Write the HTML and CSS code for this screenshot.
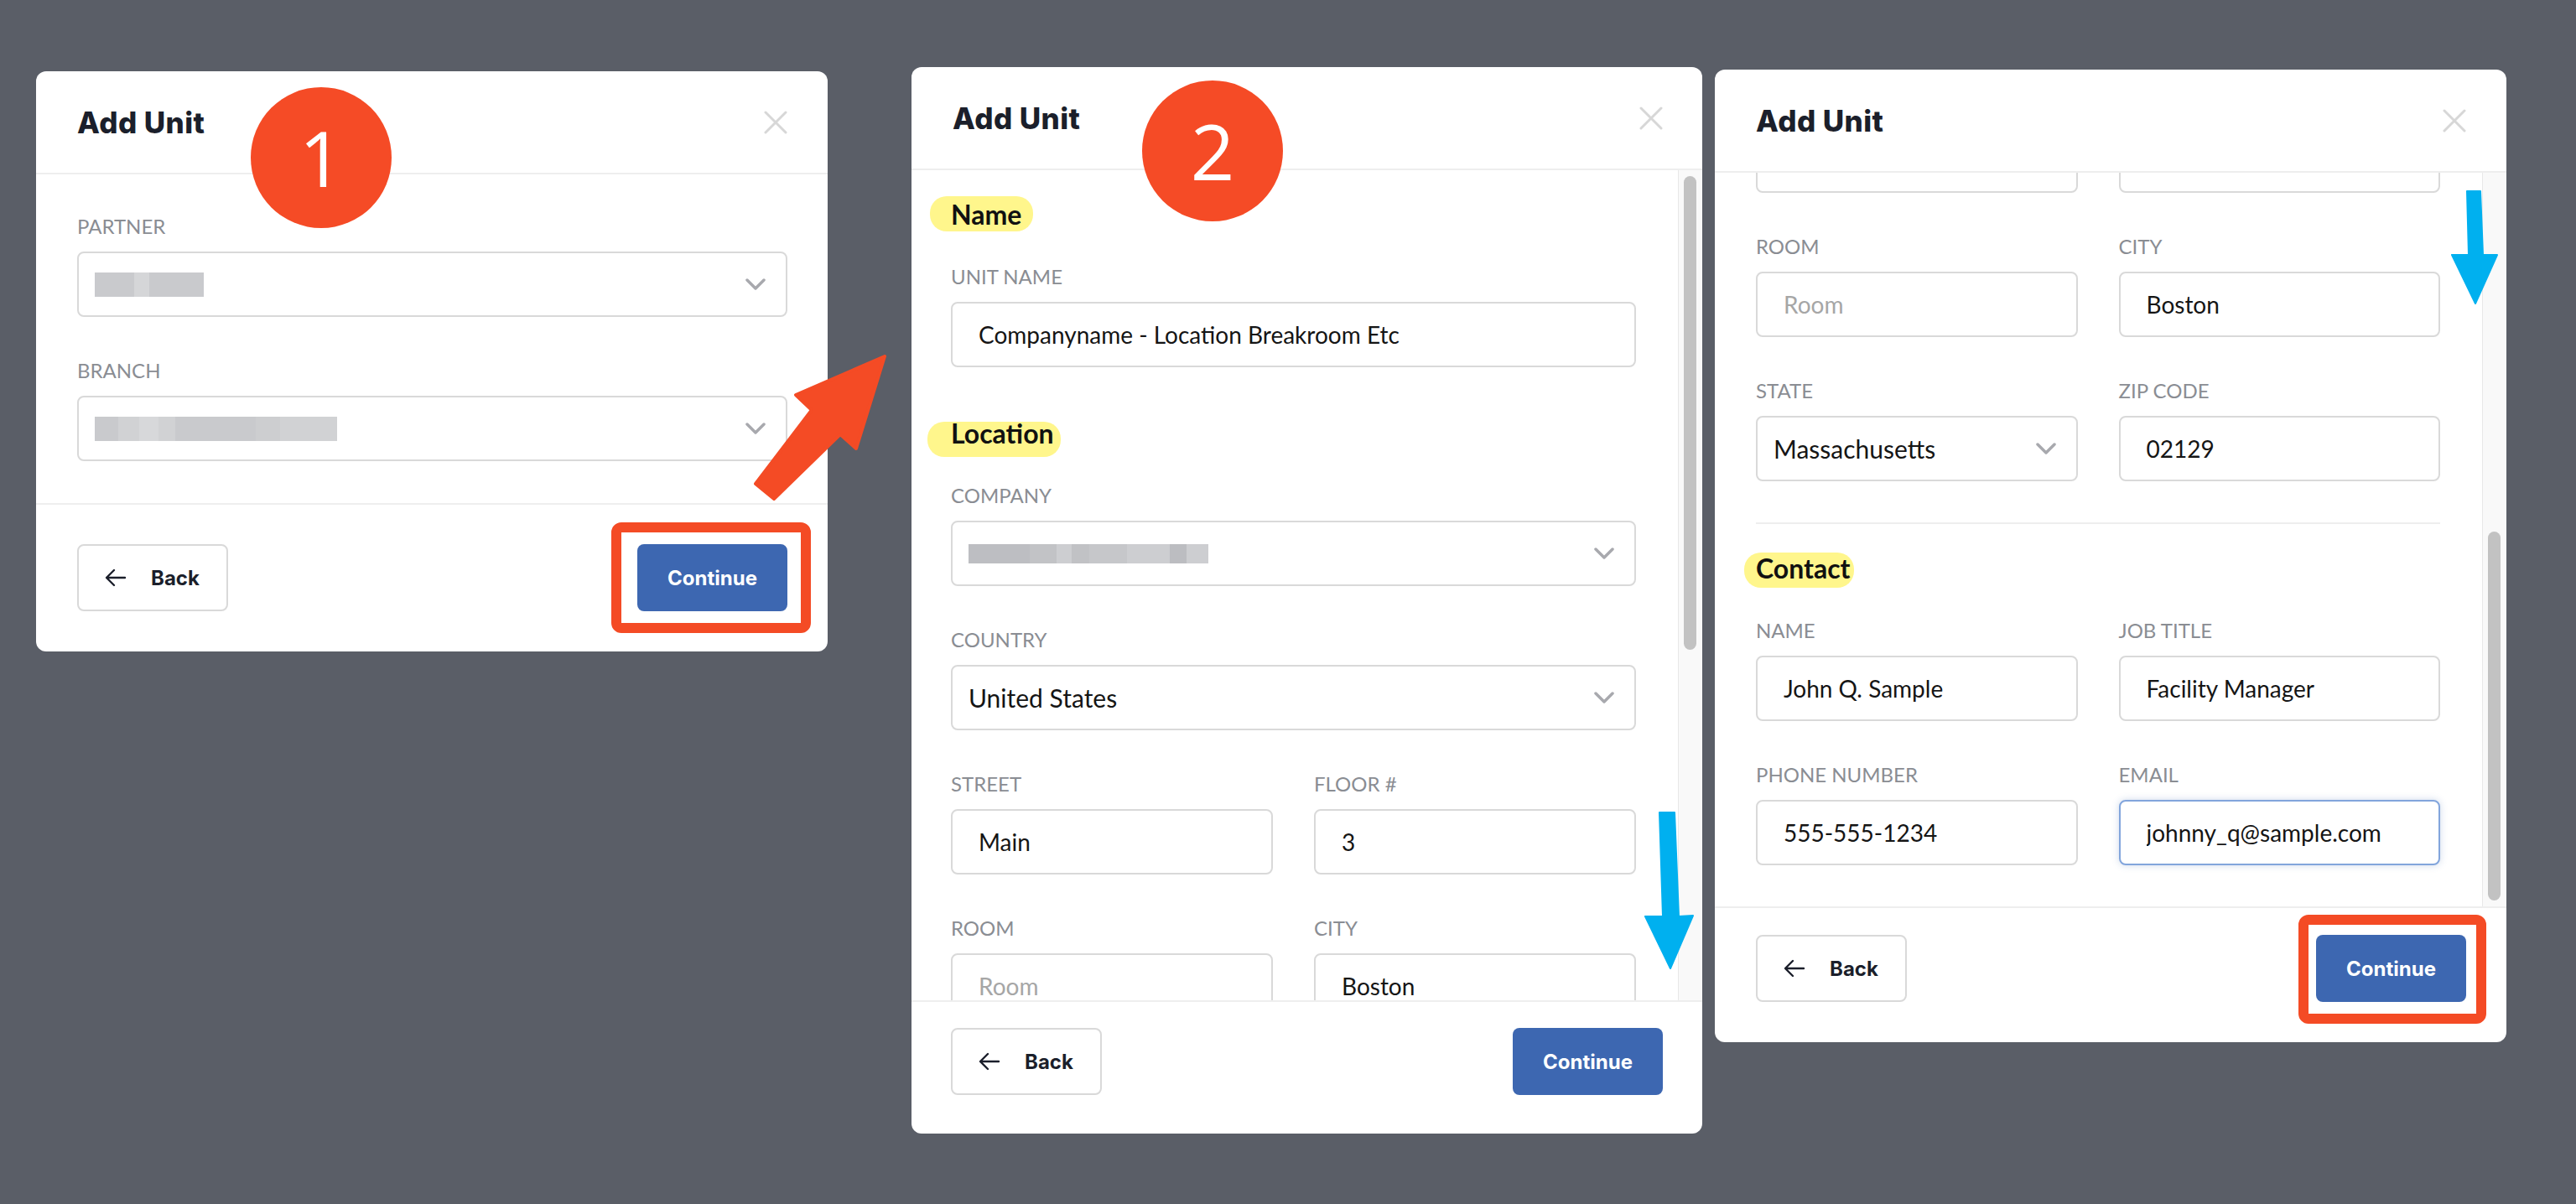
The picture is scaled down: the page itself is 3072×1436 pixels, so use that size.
FILE: index.html
```html
<!DOCTYPE html>
<html lang="en">

<head>
    <title>Add Unit - steps</title>
    <link rel="stylesheet" href="styles.css">
</head>

<body>

    <div class="canvas">

        <!-- step 1 -->
        <div class="panel panel--one">
            <div class="panel-head">
                <h2 class="panel-title">Add Unit</h2>
                <svg class="close" width="28" height="28" viewBox="0 0 28 28"><path d="M2 2L26 26M26 2L2 26" /></svg>
            </div>
            <div class="panel-body panel-body--plain">
                <div class="fields">
                    <div class="field">
                        <div class="label">Partner</div>
                        <div class="select">
                            <span class="blur blur--partner"></span>
                            <svg class="chevron" width="24" height="14" viewBox="0 0 24 14"><path d="M2 2l10 10L22 2" /></svg>
                        </div>
                    </div>
                    <div class="field">
                        <div class="label">Branch</div>
                        <div class="select">
                            <span class="blur blur--branch"></span>
                            <svg class="chevron" width="24" height="14" viewBox="0 0 24 14"><path d="M2 2l10 10L22 2" /></svg>
                        </div>
                    </div>
                </div>
            </div>
            <div class="panel-foot">
                <button class="btn btn-back">
                    <svg width="26" height="22" viewBox="0 0 26 22"><path d="M24 11H3M11 2L2 11l9 9" /></svg>
                    Back
                </button>
                <button class="btn btn-continue mark-one">Continue</button>
            </div>
            <div class="step step--one">1</div>
        </div>

        <!-- step 2 -->
        <div class="panel panel--two">
            <div class="panel-head">
                <h2 class="panel-title">Add Unit</h2>
                <svg class="close" width="28" height="28" viewBox="0 0 28 28"><path d="M2 2L26 26M26 2L2 26" /></svg>
            </div>
            <div class="panel-body">
                <div class="scroll-view">
                    <div class="form" id="form-two"></div>
                </div>
                <div class="scroll-track"><div class="thumb" style="margin-top: 7px; height: 565px;"></div></div>
            </div>
            <div class="panel-foot">
                <button class="btn btn-back">
                    <svg width="26" height="22" viewBox="0 0 26 22"><path d="M24 11H3M11 2L2 11l9 9" /></svg>
                    Back
                </button>
                <button class="btn btn-continue">Continue</button>
            </div>
            <div class="step step--two">2</div>
        </div>

        <!-- step 3, scrolled to the bottom -->
        <div class="panel panel--three">
            <div class="panel-head">
                <h2 class="panel-title">Add Unit</h2>
                <svg class="close" width="28" height="28" viewBox="0 0 28 28"><path d="M2 2L26 26M26 2L2 26" /></svg>
            </div>
            <div class="panel-body">
                <div class="scroll-view">
                    <div class="form form--scrolled" id="form-three"></div>
                </div>
                <div class="scroll-track"><div class="thumb" style="margin-top: 428px; height: 440px;"></div></div>
            </div>
            <div class="panel-foot">
                <button class="btn btn-back">
                    <svg width="26" height="22" viewBox="0 0 26 22"><path d="M24 11H3M11 2L2 11l9 9" /></svg>
                    Back
                </button>
                <button class="btn btn-continue mark-two">Continue</button>
            </div>
        </div>

        <svg class="arrows" width="3072" height="1436" viewBox="0 0 3072 1436">
            <polygon class="arrow-red" points="1055,425 949,471 968,489 901,577 923,595 1002,518 1021,535" />
            <polygon class="arrow-blue" points="1979,969 1997,969 2002,1093 2019,1092 1992,1155 1962,1093 1983,1093" />
            <polygon class="arrow-blue" points="2942,228 2958,228 2961,304 2978,304 2952,362 2924,304 2944,304" />
        </svg>
    </div>

    <template id="unit-form">
        <div class="section">
            <div class="heading"><span class="mark mark--name">Name</span></div>
            <div class="fields">
                <div class="field">
                    <div class="label">Unit Name</div>
                    <input class="input" value="Companyname - Location Breakroom Etc">
                </div>
            </div>
        </div>
        <div class="section">
            <div class="heading"><span class="mark mark--location">Location</span></div>
            <div class="fields">
                <div class="field">
                    <div class="label">Company</div>
                    <div class="select">
                        <span class="blur blur--company"></span>
                        <svg class="chevron" width="24" height="14" viewBox="0 0 24 14"><path d="M2 2l10 10L22 2" /></svg>
                    </div>
                </div>
                <div class="field">
                    <div class="label">Country</div>
                    <div class="select">
                        <span class="select-text">United States</span>
                        <svg class="chevron" width="24" height="14" viewBox="0 0 24 14"><path d="M2 2l10 10L22 2" /></svg>
                    </div>
                </div>
                <div class="row">
                    <div class="field">
                        <div class="label">Street</div>
                        <input class="input" value="Main">
                    </div>
                    <div class="field">
                        <div class="label">Floor #</div>
                        <input class="input" value="3">
                    </div>
                </div>
                <div class="row">
                    <div class="field">
                        <div class="label">Room</div>
                        <input class="input" placeholder="Room">
                    </div>
                    <div class="field">
                        <div class="label">City</div>
                        <input class="input" value="Boston">
                    </div>
                </div>
                <div class="row">
                    <div class="field">
                        <div class="label">State</div>
                        <div class="select">
                            <span class="select-text">Massachusetts</span>
                            <svg class="chevron" width="24" height="14" viewBox="0 0 24 14"><path d="M2 2l10 10L22 2" /></svg>
                        </div>
                    </div>
                    <div class="field">
                        <div class="label">Zip Code</div>
                        <input class="input" value="02129">
                    </div>
                </div>
            </div>
        </div>
        <div class="section section--rule">
            <div class="heading"><span class="mark mark--contact">Contact</span></div>
            <div class="fields">
                <div class="row">
                    <div class="field">
                        <div class="label">Name</div>
                        <input class="input" value="John Q. Sample">
                    </div>
                    <div class="field">
                        <div class="label">Job Title</div>
                        <input class="input" value="Facility Manager">
                    </div>
                </div>
                <div class="row">
                    <div class="field">
                        <div class="label">Phone Number</div>
                        <input class="input" value="555-555-1234">
                    </div>
                    <div class="field">
                        <div class="label">Email</div>
                        <input class="input input--focus" value="johnny_q@sample.com">
                    </div>
                </div>
            </div>
        </div>
    </template>

    <script>
        const tpl = document.getElementById('unit-form');
        ['form-two', 'form-three'].forEach(id => {
            document.getElementById(id).appendChild(tpl.content.cloneNode(true));
        });
    </script>

</body>

</html>
```

FILE: styles.css
```css
body {
    margin: 0;
    background-color: #5a5e67;
    font-family: Lato, "Noto Sans", sans-serif;
}

.canvas {
    position: relative;
    width: 3072px;
    height: 1436px;
    display: flex;
    align-items: flex-start;
    overflow: hidden;
}

/* panels */

.panel {
    position: relative;
    display: flex;
    flex-direction: column;
    background-color: #fff;
    border-radius: 12px;
    box-sizing: border-box;
}

.panel--one {
    width: 944px;
    height: 692px;
    margin: 85px 0 0 43px;
}

.panel--two {
    width: 943px;
    height: 1272px;
    margin: 80px 0 0 100px;
}

.panel--three {
    width: 944px;
    height: 1160px;
    margin: 83px 0 0 15px;
}

.panel-head {
    height: 123px;
    flex: none;
    box-sizing: border-box;
    border-bottom: 2px solid #eeeeee;
    display: flex;
    align-items: center;
    justify-content: space-between;
    padding: 0 48px 0 49px;
}

.panel--two .panel-head {
    padding: 0 47px 0 49px;
}

.panel-title {
    margin: 0;
    font-family: Inter, sans-serif;
    font-weight: 800;
    font-size: 35px;
    line-height: 40px;
    letter-spacing: 0.4px;
    color: #1b1f2b;
}

.close path {
    stroke: #d7d7d7;
    stroke-width: 3;
    stroke-linecap: round;
}

.panel-body {
    flex: 1;
    min-height: 0;
    display: flex;
}

.panel-body--plain {
    display: block;
    padding: 47px 48px 50px 49px;
}

.scroll-view {
    flex: 1;
    overflow: hidden;
}

.scroll-track {
    width: 28px;
    flex: none;
    background-color: #f9f9f9;
    border-left: 1px solid #e8e8e8;
}

.thumb {
    width: 15px;
    margin-left: 6px;
    border-radius: 8px;
    background-color: #c2c2c2;
}

.panel-foot {
    flex: none;
    border-top: 2px solid #eeeeee;
    display: flex;
    justify-content: space-between;
    align-items: flex-start;
    padding: 47px 48px 48px 49px;
}

.panel--two .panel-foot {
    padding: 31px 47px 46px 47px;
}

.panel--three .panel-foot {
    padding: 32px 48px 48px 49px;
}

/* form */

.form {
    padding: 35px 50px 49px 47px;
}

.panel--three .form {
    padding-left: 49px;
}

.form--scrolled {
    margin-top: -816px;
}

.section + .section {
    margin-top: 61px;
}

.section--rule {
    border-top: 2px solid #eeeeee;
}

.section + .section--rule {
    margin-top: 49px;
    padding-top: 35px;
}

.heading {
    font-weight: 700;
    font-size: 32px;
    line-height: 35px;
    color: #111;
    margin-bottom: 42px;
}

.mark {
    position: relative;
    z-index: 0;
}

.mark::before {
    content: '';
    position: absolute;
    z-index: -1;
    background-color: #fff68c;
    border-radius: 20px;
}

.mark--name::before {
    top: -2px;
    bottom: -1px;
    left: -25px;
    right: -14px;
}

.mark--location::before {
    top: 6px;
    bottom: -9px;
    left: -28px;
    right: -8px;
}

.mark--contact::before {
    top: 1px;
    bottom: -4px;
    left: -14px;
    right: -4px;
}

.fields {
    display: flex;
    flex-direction: column;
    gap: 49px;
}

.row {
    display: grid;
    grid-template-columns: 1fr 1fr;
    column-gap: 49px;
}

.label {
    font-size: 24px;
    line-height: 30px;
    text-transform: uppercase;
    color: #8a8d93;
    margin-bottom: 15px;
}

.input,
.select {
    width: 100%;
    height: 78px;
    box-sizing: border-box;
    border: 2px solid #d9d9d9;
    border-radius: 8px;
    background-color: #fff;
    font-family: Lato, "Noto Sans", sans-serif;
    color: #151515;
}

.input {
    display: block;
    padding: 0 31px;
    font-size: 28px;
    outline: none;
}

.input::placeholder {
    color: #a6a6a6;
}

.input--focus {
    border-color: #82a5dc;
    box-shadow: 0 0 8px rgba(61, 103, 177, 0.25);
}

.select {
    display: flex;
    align-items: center;
    justify-content: space-between;
    padding: 0 24px 0 19px;
    font-size: 30px;
}

.chevron path {
    fill: none;
    stroke: #a8a9ae;
    stroke-width: 3.5;
    stroke-linecap: round;
    stroke-linejoin: round;
}

/* pixelated, blurred out values */

.blur {
    display: block;
    height: 29px;
}

.blur--partner {
    width: 130px;
    background: linear-gradient(90deg, #c9cacd 0 47px, #d5d6d8 47px 65px, #c9cacd 65px);
}

.blur--branch {
    width: 289px;
    background: linear-gradient(90deg, #c9cacd 0 28px, #d1d2d4 28px 53px, #d7d8da 53px 76px,
        #d1d2d4 76px 96px, #c9cacd 96px 192px, #cdced0 192px 221px, #d1d2d4 221px);
}

.blur--company {
    width: 286px;
    height: 23px;
    background: linear-gradient(90deg, #bdbec2 0 73px, #c2c3c6 73px 105px, #cdced1 105px 123px,
        #c1c2c5 123px 144px, #c6c7ca 144px 189px, #cdced1 189px 240px, #bcbdc1 240px 260px, #cdced1 260px);
}

/* buttons */

.btn {
    height: 80px;
    box-sizing: border-box;
    border-radius: 8px;
    font-family: Inter, sans-serif;
    font-weight: 700;
    font-size: 24px;
    cursor: pointer;
}

.btn-back {
    width: 180px;
    display: flex;
    align-items: center;
    gap: 29px;
    padding: 0 0 0 31px;
    border: 2px solid #d9d9d9;
    background-color: #fff;
    color: #1b1f2b;
}

.btn-back path {
    fill: none;
    stroke: #1b1f2b;
    stroke-width: 2.4;
    stroke-linecap: round;
    stroke-linejoin: round;
}

.btn-continue {
    position: relative;
    width: 179px;
    border: none;
    background-color: #3d67b1;
    color: #fff;
}

/* annotations */

.mark-one::after,
.mark-two::after {
    content: '';
    position: absolute;
    border: 12px solid #f44b25;
    border-radius: 12px;
}

.mark-one::after {
    top: -26px;
    bottom: -26px;
    left: -31px;
    right: -28px;
}

.mark-two::after {
    top: -24px;
    bottom: -26px;
    left: -21px;
    right: -24px;
}

.step {
    position: absolute;
    width: 168px;
    height: 168px;
    border-radius: 50%;
    background-color: #f54b26;
    color: #fff;
    font-family: "Open Sans", sans-serif;
    font-size: 92px;
    line-height: 1;
    display: flex;
    align-items: center;
    justify-content: center;
}

.step--one {
    left: 256px;
    top: 19px;
}

.step--two {
    left: 275px;
    top: 16px;
}

.arrows {
    position: absolute;
    left: 0;
    top: 0;
    pointer-events: none;
}

.arrow-red {
    fill: #f44b25;
    stroke: #f44b25;
    stroke-width: 4;
    stroke-linejoin: round;
}

.arrow-blue {
    fill: #00b0ef;
    stroke: #00b0ef;
    stroke-width: 2;
    stroke-linejoin: round;
}
```
